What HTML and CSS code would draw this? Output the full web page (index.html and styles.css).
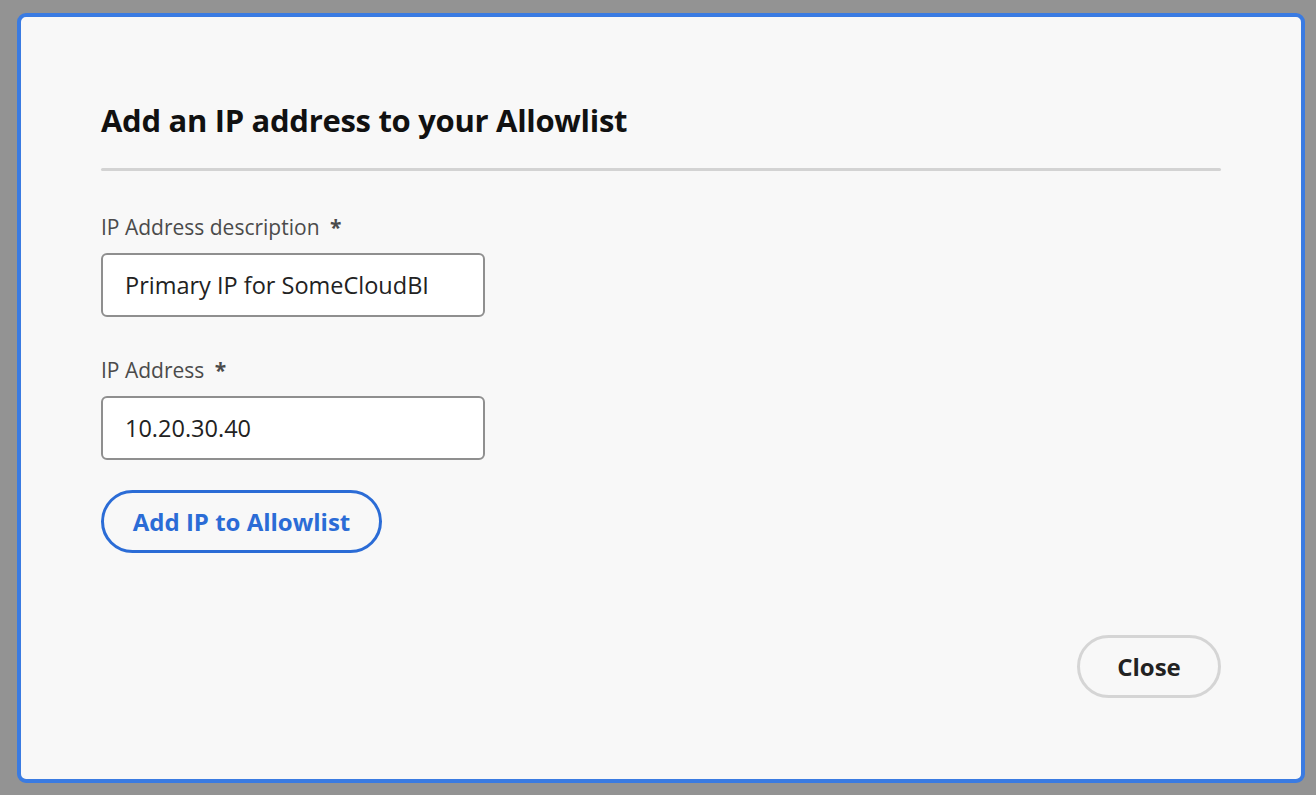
FILE: index.html
```html
<!DOCTYPE html>
<html lang="en">
<head>
<meta charset="utf-8">
<title>Add an IP address to your Allowlist</title>
<link rel="stylesheet" href="styles.css">
</head>
<body>
<div class="overlay">
  <div class="dialog">
    <h1 class="title">Add an IP address to your Allowlist</h1>
    <div class="divider"></div>
    <div class="field field-first">
      <label class="label">IP Address description <span class="req">*</span></label>
      <div class="input">Primary IP for SomeCloudBI</div>
    </div>
    <div class="field field-next">
      <label class="label">IP Address <span class="req">*</span></label>
      <div class="input">10.20.30.40</div>
    </div>
    <div class="actions">
      <button class="btn btn-primary">Add IP to Allowlist</button>
    </div>
    <div class="footer">
      <button class="btn btn-secondary">Close</button>
    </div>
  </div>
</div>
</body>
</html>
```
FILE: styles.css
```css
* { box-sizing: border-box; }
html, body {
  margin: 0;
  padding: 0;
  width: 1316px;
  height: 795px;
  background: #939393;
  font-family: "Open Sans", "Noto Sans", sans-serif;
  overflow: hidden;
}
.overlay {
  padding: 13px 11px 12px 17px;
  height: 795px;
}
.dialog {
  width: 1288px;
  height: 770px;
  background: #f8f8f8;
  border: 4px solid #3a7be2;
  border-radius: 9px;
  padding: 83px 80px 81px 80px;
  display: flex;
  flex-direction: column;
}
.title {
  margin: 0;
  font-size: 31px;
  line-height: 40px;
  font-weight: 700;
  color: #111;
  letter-spacing: -0.3px;
}
.divider {
  margin-top: 28px;
  height: 3px;
  border-radius: 2px;
  background: #d3d3d3;
}
.field {
  display: flex;
  flex-direction: column;
  align-items: flex-start;
}
.field-first { margin-top: 41px; }
.field-next { margin-top: 38px; }
.label {
  font-size: 21px;
  line-height: 30px;
  color: #4b4b4b;
  margin-bottom: 11px;
}
.req {
  margin-left: 5px;
  font-weight: 700;
  color: #4b4b4b;
}
.input {
  width: 384px;
  height: 64px;
  border: 2px solid #8f8f8f;
  border-radius: 6px;
  background: #fff;
  padding: 0 22px;
  display: flex;
  align-items: center;
  font-size: 23.5px;
  color: #222;
}
.actions {
  margin-top: 30px;
  display: flex;
}
.btn {
  font-family: inherit;
  font-weight: 700;
  font-size: 24px;
  height: 63px;
  border-radius: 32px;
  background: transparent;
  padding: 0;
  cursor: pointer;
}
.btn-primary {
  border: 3px solid #2b6cd6;
  color: #2b6cd6;
  width: 281px;
}
.btn-secondary {
  border: 3px solid #d5d5d5;
  color: #222;
  width: 144px;
}
.footer {
  margin-top: auto;
  display: flex;
  justify-content: flex-end;
}
```
